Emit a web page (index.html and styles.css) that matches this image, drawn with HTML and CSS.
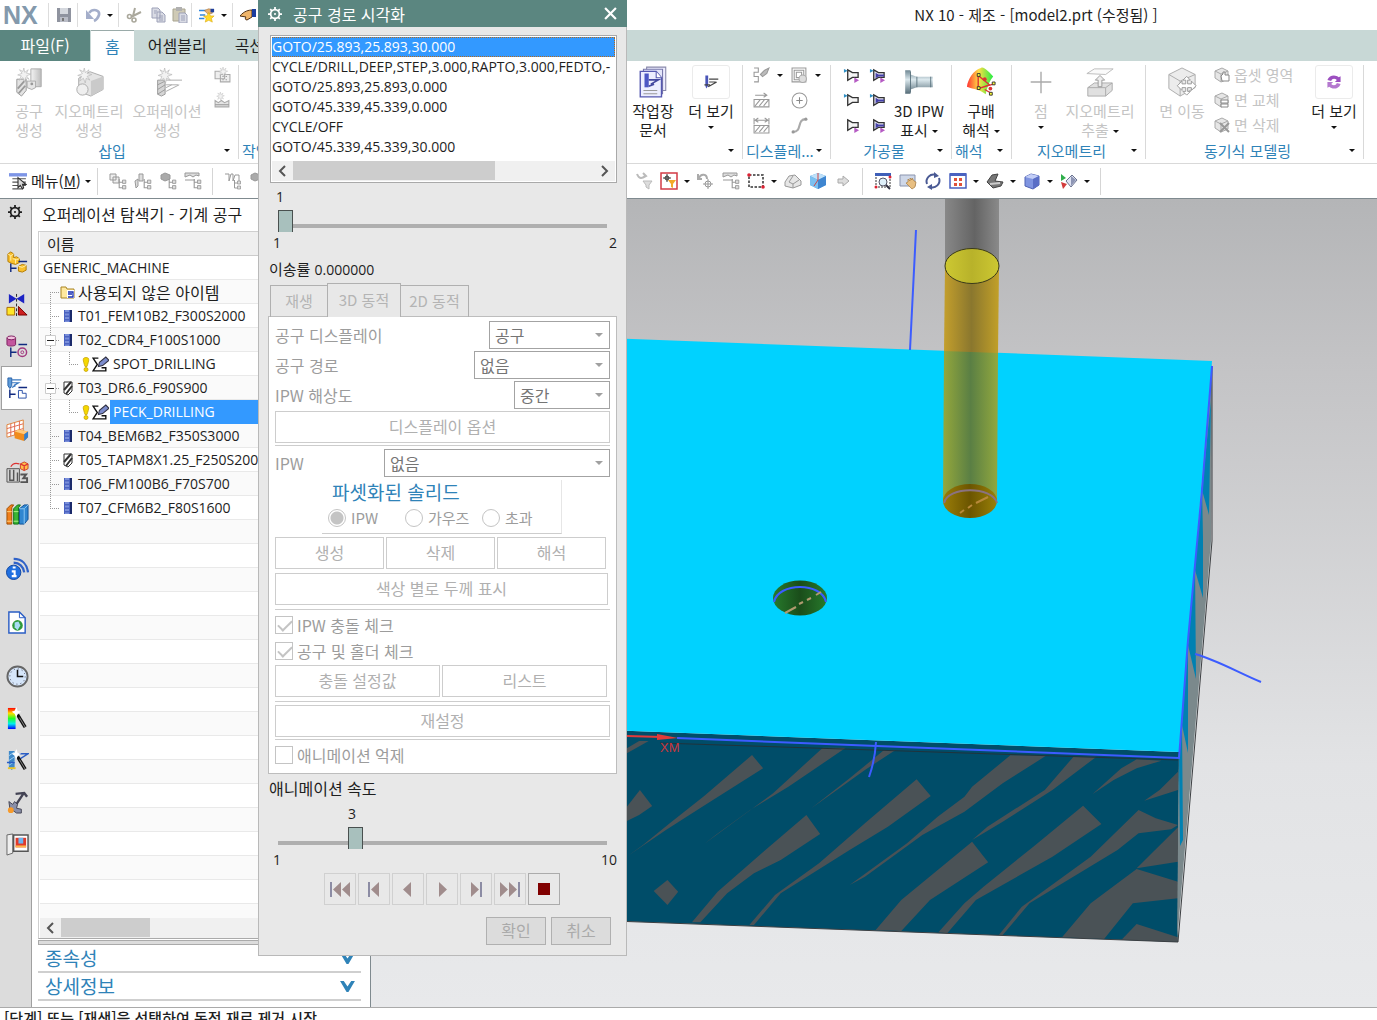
FILE: index.html
```html
<!DOCTYPE html>
<html lang="ko">

<head>
    <meta charset="UTF-8">
    <meta name="viewport" content="width=device-width, initial-scale=1.0">
    <title>NX 10 - 제조</title>
    <link rel="stylesheet" href="styles.css">
</head>

<body>
    <!-- 아이콘 모음 -->
    <svg class="defs" width="0" height="0" aria-hidden="true">
        <defs>
            <linearGradient id="metal"><stop offset="0" stop-color="#f4f4f4"/><stop offset="1" stop-color="#bdbdbd"/></linearGradient>
            <linearGradient id="steel" x2="0" y2="1"><stop offset="0" stop-color="#6f8793"/><stop offset=".4" stop-color="#dce9ee"/><stop offset="1" stop-color="#546b77"/></linearGradient>
            <linearGradient id="rainbow" x2="0" y2="1"><stop offset="0" stop-color="#f00"/><stop offset=".25" stop-color="#fd0"/><stop offset=".5" stop-color="#2f2"/><stop offset=".75" stop-color="#0ee"/><stop offset="1" stop-color="#00f"/></linearGradient>
            <linearGradient id="heat"><stop offset="0" stop-color="#f33"/><stop offset=".45" stop-color="#fd4"/><stop offset="1" stop-color="#2e4"/></linearGradient>
        </defs>
        <symbol id="star" viewBox="0 0 16 16"><path d="M8 0l1 5 4-3-2 4 5 1-5 2 3 4-4-2-1 5-2-5-4 3 2-5-4-1 5-2-3-4 4 2z" fill="#f2f2f2" stroke="#b5b5b5" stroke-width=".7"/></symbol>
        <symbol id="minitree" viewBox="0 0 8 10"><path d="M1 0v8h3M1 3h3" fill="none" stroke="#999"/><path d="M4 1h3v3H4zM4 6h3v3H4z" fill="#ddd" stroke="#999" stroke-width=".8"/></symbol>

        <symbol id="i-save" viewBox="0 0 16 16"><path d="M1 1h14v14H1z" fill="#8f939f"/><path d="M4 1h8v6H4z" fill="#d5d8de"/><path d="M4 10h8v5H4z" fill="#b9bcc6"/><path d="M6 11h2v3H6z" fill="#777"/></symbol>
        <symbol id="i-undo" viewBox="0 0 16 16"><path d="M4 6c4-5 11-3 10 2-1 3-3 5-5 6" fill="none" stroke="#a4aeca" stroke-width="2.600"/><path d="M1 3v9h8z" fill="#a4aeca"/></symbol>
        <symbol id="i-cut" viewBox="0 0 16 16"><path d="M9 1L7 9M15 5L5 10" stroke="#aaa89c" stroke-width="2"/><g fill="none" stroke="#aaa89c" stroke-width="1.600"><circle cx="3.500" cy="9.500" r="2"/><circle cx="8" cy="13" r="2"/></g></symbol>
        <symbol id="i-copy" viewBox="0 0 16 16"><path d="M2 1h6l2 2v8H2zM7 5h5l3 3v7H7z" fill="#d9dbe4" stroke="#9da1b8"/><path d="M9 9h4M9 11h4M9 13h4M4 4h3M4 6h2" stroke="#9da1b8"/></symbol>
        <symbol id="i-paste" viewBox="0 0 16 16"><path d="M1 2h12v12H1z" fill="#cfcab6" stroke="#a8a490"/><path d="M4 0h6v4H4z" fill="#b0b0b0"/><path d="M7 6h6l2 2v8H7z" fill="#d9dbe4" stroke="#9da1b8"/><path d="M9 9h4M9 11h4M9 13h4" stroke="#9da1b8"/></symbol>
        <symbol id="i-quick" viewBox="0 0 18 16"><path d="M0 3h8M1 8h6M0 12h6" stroke="#2f86e0" stroke-width="1.600"/><path d="M6 3l5-2 4 1v4l-5 1z" fill="#e7b06f" stroke="#94602a" stroke-width=".6"/><path d="M13 1h4v4h-4z" fill="#1f3f9c"/><path d="M11 5l2 4 4 0-3 3 1 4-4-2-4 2 1-4-3-3h4z" fill="#ffd92e" stroke="#d8a400" stroke-width=".6"/></symbol>
        <symbol id="i-hand" viewBox="0 0 16 16"><path d="M0 9c4-5 9-6 12-6v7l-5 3c-2 0-2-2-1-3z" fill="#f0b56a" stroke="#503014"/><path d="M12 2h4v8h-4z" fill="#1b3d9e"/></symbol>

        <symbol id="i-tool" viewBox="0 0 32 32"><path d="M18 2h11v19H18z" fill="url(#metal)" stroke="#aaa"/><path d="M14 15h9v7l-4 2-5-2z" fill="#e6e6e6" stroke="#aaa"/><circle cx="19" cy="18" r="1.500" fill="#999"/><path d="M3 13h10v12l-5 6-5-4z" fill="#e3e3e3" stroke="#999"/><path d="M4 23l8-9M5 28l7-8" stroke="#999" stroke-width="2"/><use href="#star" x="3" y="1" width="15" height="15"/></symbol>
        <symbol id="i-geom" viewBox="0 0 32 32"><path d="M5 12l12-7 14 5v14l-13 7-13-5z" fill="#e4e4e4" stroke="#aaa"/><path d="M18 15l13-5v14l-13 7z" fill="#cacaca"/><circle cx="9" cy="24" r="6" fill="#efefef" stroke="#aaa"/><use href="#star" x="2" y="1" width="18" height="16"/></symbol>
        <symbol id="i-oper" viewBox="0 0 32 32"><path d="M6 14h8v15l-4 2-4-2z" fill="#d5d5d5" stroke="#999"/><path d="M6 19l8-4M6 24l8-5M6 29l8-5" stroke="#999"/><path d="M15 14h17M15 19h13M15 26l14-7M15 22l6-3" fill="none" stroke="#aaa"/><use href="#star" x="5" y="1" width="17" height="16"/></symbol>
        <symbol id="i-prog" viewBox="0 0 16 16"><path d="M1 4h9v7H1zM6 7h9v7H6z" fill="#eee" stroke="#aaa"/><path d="M8 9h1M11 9h1M8 12h1M11 12h1" stroke="#888"/><use href="#star" x="4" y="0" width="9" height="9"/></symbol>
        <symbol id="i-meth" viewBox="0 0 16 16"><path d="M1 8l3 2 3-2 3 2 4-2v6H1z" fill="#e4e4e4" stroke="#aaa"/><path d="M1 12h13" stroke="#999"/><use href="#star" x="2" y="0" width="8" height="8"/></symbol>
        <symbol id="i-doc" viewBox="0 0 28 32"><path d="M8 2h18v22H8z" fill="#eef" stroke="#88a"/><path d="M5 4h18v23H5z" fill="#e4e6fa" stroke="#77a"/><path d="M2 6h15l5 6v18H2z" fill="#eceeff" stroke="#5558b0" stroke-width="1.300"/><path d="M17 6v6h5" fill="#fff" stroke="#5558b0"/><path d="M6 8h4v13H6z" fill="#4b56c4"/><path d="M10 14h9l-7 4M10 20l5-2" fill="none" stroke="#4449a0" stroke-width="1.600"/><path d="M5 24h13M5 27h13" stroke="#999"/></symbol>
        <symbol id="i-op" viewBox="0 0 16 16"><path d="M2 1h3v11l-2 3-1-3z" fill="#4a55b8"/><path d="M6 5h10l-8 0M6 8h7M5 13l9-5M1 11h6" fill="none" stroke="#444" stroke-width="1.300"/></symbol>

        <symbol id="i-path" viewBox="0 0 16 16"><path d="M1 1h4v4H1v4h4v5H1" fill="none" stroke="#999"/><path d="M7 7l4-4 4-2-2 5-4 3z" fill="#bbb" stroke="#999"/></symbol>
        <symbol id="i-rings" viewBox="0 0 16 16"><path d="M1 1h13v13H1zM3 3h9v9H3zM5 5h5v5H5z" fill="none" stroke="#999"/><circle cx="11" cy="11" r="3.500" fill="#ddd" stroke="#aaa"/></symbol>
        <symbol id="i-hatch" viewBox="0 0 16 16"><path d="M1 7h14v7H1zM2 13l5-6M6 13l5-6M10 13l5-6" fill="none" stroke="#999"/><path d="M2 3h11M10 1l3 2-3 2" fill="none" stroke="#999"/></symbol>
        <symbol id="i-hatch2" viewBox="0 0 16 16"><path d="M1 8h14v7H1zM2 14l5-6M6 14l5-6M10 14l5-6M1 1v6M15 1v6M2 3h12M5 1L2 3l3 2M11 1l3 2-3 2" fill="none" stroke="#999"/></symbol>
        <symbol id="i-circ" viewBox="0 0 16 16"><circle cx="8" cy="8" r="7" fill="none" stroke="#999"/><path d="M5 8h6M8 5v6" stroke="#888"/></symbol>
        <symbol id="i-curve" viewBox="0 0 16 16"><path d="M2 14c9 0 3-12 12-12" fill="none" stroke="#aaa" stroke-width="2"/><circle cx="2" cy="14" r="1.500" fill="#999"/><circle cx="14" cy="2" r="1.500" fill="#999"/></symbol>

        <symbol id="cone" viewBox="0 0 18 16"><path d="M5 2l5 3h6v5h-6l-5 3z" fill="#f4f4f4" stroke="#333" stroke-width="1.400"/></symbol>
        <symbol id="cone2" viewBox="0 0 18 16"><path d="M5 2l5 3h6v5h-6l-5 3z" fill="#e4e4f2" stroke="#333" stroke-width="1.400"/><path d="M7 5l3 2h6v2h-6l-3 2z" fill="#4440a8"/></symbol>
        <symbol id="i-c1" viewBox="0 0 18 16"><use href="#cone"/><path d="M1 1l4 2-4 2z" fill="#2f8fc4"/><path d="M12 10l5 3-5 3z" fill="#b65cc4"/></symbol>
        <symbol id="i-c2" viewBox="0 0 18 16"><use href="#cone2"/><path d="M1 1l4 2-4 2z" fill="#2f8fc4"/><path d="M12 10l5 3-5 3z" fill="#b65cc4"/></symbol>
        <symbol id="i-c3" viewBox="0 0 18 16"><use href="#cone"/><path d="M1 1l4 2-4 2z" fill="#2f8fc4"/></symbol>
        <symbol id="i-c4" viewBox="0 0 18 16"><use href="#cone2"/><path d="M1 1l4 2-4 2z" fill="#2f8fc4"/></symbol>
        <symbol id="i-c5" viewBox="0 0 18 16"><use href="#cone"/><path d="M12 10l5 3-5 3z" fill="#b65cc4"/></symbol>
        <symbol id="i-c6" viewBox="0 0 18 16"><use href="#cone2"/><path d="M12 10l5 3-5 3z" fill="#b65cc4"/></symbol>
        <symbol id="i-ipw" viewBox="0 0 28 32"><path d="M1 5h5v4l6 2h15v10H12l-6 2v4H1z" fill="url(#steel)"/><path d="M12 11v10M25 11v10M6 6v20" stroke="#536a76" stroke-width=".8"/></symbol>
        <symbol id="i-draft" viewBox="0 0 32 32"><path d="M16 1c3-2 9 5 13 9-4 5-6 10-8 19-6-5-12-5-20-8C2 13 8 3 16 1z" fill="url(#heat)"/><path d="M13 9l12 10M13 23l12-4M13 9v14l17-5M20 24l7 4" fill="none" stroke="#d33" stroke-width="1.500"/><path d="M12 7h3v3h-3zM12 21h3v3h-3zM28 16h3v3h-3zM25 27h3v3h-3z" fill="#ff3" stroke="#333"/><circle cx="20" cy="13" r="2" fill="#d33"/><circle cx="26" cy="23" r="2" fill="#d33"/></symbol>
        <symbol id="i-plus" viewBox="0 0 32 32"><path d="M16 5v23M5 16h22" stroke="#aaa" stroke-width="1.500"/></symbol>
        <symbol id="i-extract" viewBox="0 0 32 32"><path d="M2 7l8-5h20l-8 6z" fill="#fafafa" stroke="#bbb"/><path d="M3 22l7-5h19v8l-7 6H3z" fill="#e0e0e0" stroke="#aaa"/><path d="M3 22h19v9M22 22l7-5" fill="none" stroke="#aaa"/><path d="M16 9l5 5h-3v7h-4v-7h-3z" fill="#eee" stroke="#999"/></symbol>
        <symbol id="i-move" viewBox="0 0 32 32"><path d="M2 8l14-7 14 7v14L14 31 2 23z" fill="#ececec" stroke="#aaa"/><path d="M2 8l12 7v16M14 15l16-7" fill="none" stroke="#aaa"/><path d="M21 10l4 4h-3v4h4v-3l5 5-5 5v-3h-4v4h3l-4 4-4-4h3v-4h-4v3l-5-5 5-5v3h4v-4h-3z" fill="#fff" stroke="#999"/></symbol>
        <symbol id="i-cube" viewBox="0 0 16 16"><path d="M1 4l7-3 6 3v8l-7 3-6-4z" fill="#e6e6e6" stroke="#aaa"/><path d="M1 4l6 3v8M7 7l7-3" fill="none" stroke="#aaa"/></symbol>
        <symbol id="i-offset" viewBox="0 0 16 16"><use href="#i-cube"/><path d="M7 9l2-2v-2h2v3h4v6H8z" fill="#fff" stroke="#888"/></symbol>
        <symbol id="i-repl" viewBox="0 0 16 16"><use href="#i-cube"/><path d="M7 8h7v3H7zM7 12h7v3H7z" fill="#fff" stroke="#888"/></symbol>
        <symbol id="i-del" viewBox="0 0 16 16"><use href="#i-cube"/><path d="M6 6l9 9M15 6l-9 9" stroke="#999" stroke-width="2"/></symbol>
        <symbol id="i-sync" viewBox="0 0 16 16"><path d="M1 6c2-6 9-6 12-3l2-1v6H9l2-2C9 4 6 4 5 7z" fill="#9c4fc0"/><path d="M15 10c-2 6-9 6-12 3l-2 1V8h6l-2 2c2 2 5 2 6-1z" fill="#b478cf"/></symbol>

        <symbol id="i-menu" viewBox="0 0 16 16"><path d="M0 1h16v3H0z" fill="#7d95e6"/><path d="M3 6h12M3 9h12M3 12h12M3 15h9" stroke="#555"/><path d="M8 5v9l2-2 2 3 1-1-1-3h3z" fill="#ddd" stroke="#333"/></symbol>
        <symbol id="i-t1" viewBox="0 0 18 18"><path d="M1 2h6v6H1zM4 5h6v6H4z" fill="#eee" stroke="#999"/><use href="#minitree" x="9" y="7" width="9" height="11"/></symbol>
        <symbol id="i-t2" viewBox="0 0 18 18"><path d="M1 9l3-2v7l-2 2zM5 2h4v7H5z" fill="#ddd" stroke="#999"/><use href="#minitree" x="9" y="7" width="9" height="11"/></symbol>
        <symbol id="i-t3" viewBox="0 0 18 18"><path d="M2 3l4-2 5 2v4L6 9 2 7z" fill="#aaa" stroke="#999"/><use href="#minitree" x="9" y="7" width="9" height="11"/></symbol>
        <symbol id="i-t4" viewBox="0 0 18 18"><path d="M1 1h14v3l-3-1-3 2-3-2-5 2zM1 8h10" fill="#ddd" stroke="#999"/><use href="#minitree" x="9" y="7" width="9" height="11"/></symbol>
        <symbol id="i-t5" viewBox="0 0 18 18"><path d="M1 2h4v7l2-7h2v7l2-6h4v6" fill="none" stroke="#999"/><use href="#minitree" x="9" y="8" width="9" height="10"/></symbol>
        <symbol id="i-filter" viewBox="0 0 18 18"><path d="M2 2c2 5 5 5 8 2M8 1l3 3-4 2" fill="none" stroke="#bbb" stroke-width="2"/><path d="M8 9h9l-3 4v4l-3-2v-2z" fill="#ddd" stroke="#bbb"/></symbol>
        <symbol id="i-snap" viewBox="0 0 18 18"><path d="M1 1h16v16H1z" fill="#fff" stroke="#d23b46" stroke-width="1.500"/><circle cx="7" cy="6" r="2" fill="none" stroke="#333"/><path d="M3 6h8M7 2v8" stroke="#333"/><path d="M8 8h8l-3 4v4l-2-1v-3z" fill="#f3a928"/></symbol>
        <symbol id="i-rot" viewBox="0 0 18 18"><path d="M2 6c2-5 8-4 8 1M1 2v5h4" fill="none" stroke="#aaa" stroke-width="2"/><circle cx="11" cy="12" r="3" fill="none" stroke="#999"/><path d="M6 12h10M11 7v10" stroke="#999"/></symbol>
        <symbol id="i-rect" viewBox="0 0 18 18"><path d="M2 3h14v12H2z" fill="none" stroke="#333" stroke-width="1.500" stroke-dasharray="2.500 1.500"/><circle cx="2" cy="3" r="1.800" fill="#d23"/><circle cx="16" cy="15" r="1.800" fill="#d23"/></symbol>
        <symbol id="i-solid" viewBox="0 0 18 18"><path d="M1 10l4-6 6-1 6 6v4l-8 3-8-2z" fill="#e6e6e6" stroke="#999"/><path d="M5 10l4-6M9 12v4M5 10l4 2 6-4" fill="none" stroke="#999"/></symbol>
        <symbol id="i-bcube" viewBox="0 0 18 18"><path d="M1 4l8-3 8 3v9l-8 4-8-4z" fill="#4e9fe4"/><path d="M1 4l8-3 8 3-8 4z" fill="#bfe0f8"/><path d="M1 4l8 4v9l-8-4z" fill="#7cc0f0"/><path d="M9 8l8-4v9l-8 4z" fill="#3f86d0"/><path d="M9 1v7l-4 6" fill="none" stroke="#c44"/></symbol>
        <symbol id="i-arrow" viewBox="0 0 18 18"><path d="M4 7h5V4l6 5-6 5v-3H4z" fill="#ddd" stroke="#aaa"/></symbol>
        <symbol id="i-fit" viewBox="0 0 18 18"><path d="M2 3h14v12H2z" fill="#fff" stroke="#333" stroke-dasharray="2 1"/><path d="M1 1h16v3H1z" fill="#3f5fb8"/><circle cx="9" cy="10" r="4" fill="#dff0fa" stroke="#556"/><path d="M12 13l4 4" stroke="#334" stroke-width="2"/><circle cx="2" cy="15" r="1.500" fill="#d23"/><circle cx="16" cy="5" r="1.500" fill="#d23"/></symbol>
        <symbol id="i-pan" viewBox="0 0 18 18"><path d="M1 3h15v11H1z" fill="#ced7e8" stroke="#8a94ad"/><path d="M7 11l2-1V7l2 2V6l2 2V6l2 3 2 1-1 5-3 2z" fill="#e8bf82" stroke="#a87b3f" stroke-width=".7"/></symbol>
        <symbol id="i-refresh" viewBox="0 0 18 18"><path d="M3 12A7 7 0 0 1 12 3M15 6a7 7 0 0 1-9 9" fill="none" stroke="#4a5a94" stroke-width="2"/><path d="M10 0l5 4-5 2zM8 12l-5 3 5 3z" fill="#4a5a94"/></symbol>
        <symbol id="i-layout" viewBox="0 0 18 18"><path d="M1 2h16v14H1z" fill="#fff" stroke="#4a62c0" stroke-width="1.500"/><path d="M1 1h16v3H1z" fill="#4a62c0"/><path d="M5 6h3v3H5zM10 6h3v3h-3zM5 11h3v3H5zM10 11h3v3h-3z" fill="#e0523a"/></symbol>
        <symbol id="i-view" viewBox="0 0 18 18"><path d="M1 10l5-7 6-1-3 7 8 1-2 4-8 2z" fill="#777" stroke="#444"/><path d="M4 12l10-1" stroke="#ccc" stroke-width="2"/></symbol>
        <symbol id="i-shade" viewBox="0 0 18 18"><path d="M2 5l6-3 8 2v9l-6 4-8-3z" fill="#7f94e0" stroke="#4f62b4"/><path d="M2 5l8 2 6-3-8-2z" fill="#c3cef6"/><path d="M10 7l6-3v9l-6 4z" fill="#5a6ec6"/></symbol>
        <symbol id="i-orient" viewBox="0 0 18 18"><path d="M1 2l5 4-5 3z" fill="#2fae4b"/><path d="M1 10l6 2-4 5z" fill="#d23b3b"/><path d="M6 9l6-6 5 5-6 7z" fill="#dfe3f2" stroke="#6b7390"/><path d="M11 4v10l5-6z" fill="#8d95b4"/></symbol>

        <symbol id="i-gear" viewBox="0 0 16 16"><circle cx="8" cy="8" r="5" fill="none" stroke="currentColor" stroke-width="2"/><path d="M8 0v3M8 13v3M0 8h3M13 8h3M2.500 2.500l2 2M11.500 11.500l2 2M13.500 2.500l-2 2M4.500 11.500l-2 2" stroke="currentColor" stroke-width="2"/><circle cx="8" cy="8" r="1.200" fill="currentColor"/></symbol>
        <symbol id="i-asm" viewBox="0 0 24 24"><path d="M2 3l3-2 3 2v4l3-1 3 2v4l-4 2-4-1-4-2zM13 16l4-2 4 1v5l-4 2-4-1z" fill="#f8bf2c" stroke="#b57b00"/><path d="M2 3l3 2 3-2M5 5v5M7 8l4 1 3-1M10 9v4M13 16l4 1 4-2" fill="none" stroke="#fff0b0"/><path d="M5 13v9M5 18h6M13 11h9" stroke="#112a80" stroke-width="1.500"/></symbol>
        <symbol id="i-con" viewBox="0 0 24 24"><path d="M3 1l8 5-8 5zM19 1l-8 5 8 5z" fill="#1c23c4"/><path d="M1 15h8v8H1z" fill="#ffe628" stroke="#a86b00"/><path d="M13 14l9 9h-9z" fill="#cc1f1f" stroke="#700"/><path d="M11 1v23" stroke="#222" stroke-dasharray="3 2"/></symbol>
        <symbol id="i-part" viewBox="0 0 24 24"><path d="M1 3v7c0 2 9 2 9 0V3" fill="#c3559e" stroke="#7d1f5f"/><ellipse cx="5.500" cy="3" rx="4.500" ry="2" fill="#f2c2df" stroke="#7d1f5f"/><path d="M5 13v10M5 18h6M13 10h9" stroke="#112a80" stroke-width="1.500"/><circle cx="17" cy="18" r="4.500" fill="none" stroke="#a2397f" stroke-width="1.500"/><circle cx="17" cy="18" r="1.500" fill="none" stroke="#a2397f"/></symbol>
        <symbol id="i-opnav" viewBox="0 0 24 24"><path d="M2 1h4v8l-2 3-2-3z" fill="#5d9bd8" stroke="#2a62a8"/><path d="M6 3h10M6 6h7l-5 3M6 11l4-2" fill="none" stroke="#3a78c0" stroke-width="1.300"/><path d="M4 13v9M4 18h6M13 11h9" stroke="#112a80" stroke-width="1.500"/><path d="M13 14h4v3h4v5h-8z" fill="#fff" stroke="#2a4fa8"/></symbol>
        <symbol id="i-feat" viewBox="0 0 24 24"><path d="M1 6l17-5v13L1 19z" fill="#fff" stroke="#e0813a"/><path d="M1 10l17-5M1 15l17-5M5 5v13M9 4v13M14 2v13" stroke="#e06a50"/><path d="M9 13l4-2 10 2v6l-4 4-10-3z" fill="#f08c1c"/><path d="M9 13l4-2 10 2-4 3z" fill="#ffc97a"/><path d="M19 16l4-3v6l-4 4z" fill="#2f7fd0"/></symbol>
        <symbol id="i-mach" viewBox="0 0 24 24"><path d="M1 8h13v14H1z" fill="#d4d4d4" stroke="#555"/><path d="M4 9v11h4V9M12 12v9" fill="none" stroke="#555" stroke-width="1.500"/><path d="M15 3l4-2 4 2v5l-4 2-4-2z" fill="#ffc04a" stroke="#c42"/><path d="M15 3l4 2 4-2M19 5v5M5 6c2-4 6-4 9-3" fill="none" stroke="#d33" stroke-width="1.300"/><path d="M15 14h6l-3 4h4v4h-7" fill="none" stroke="#555" stroke-width="2"/></symbol>
        <symbol id="i-books" viewBox="0 0 24 24"><path d="M1 6l4-4h3l-2 3v17H1z" fill="#f07f1c" stroke="#a04e00"/><path d="M8 6l4-4h3l-2 3v17H8z" fill="#38b635" stroke="#0f6f12"/><path d="M14 6l5-4h4v15l-4 5h-5z" fill="#2f86d0" stroke="#0f4f94"/><path d="M14 6h5v16M19 6l4-4" fill="none" stroke="#8cc8f4"/><path d="M1 9h5M1 19h5" stroke="#ffd07a"/><path d="M8 9h5M8 19h5" stroke="#b4f08a"/></symbol>
        <symbol id="i-info" viewBox="0 0 24 24"><circle cx="8" cy="16" r="7.500" fill="#1f6fe0" stroke="#1247a0"/><path d="M7 11h3M6 15h3v5M6 20h5" stroke="#fff" stroke-width="2.200" fill="none"/><path d="M8 2c9 0 14 6 15 14M8 6c6 0 10 4 11 10" fill="none" stroke="#2f62c8" stroke-width="2.400"/></symbol>
        <symbol id="i-web" viewBox="0 0 24 24"><path d="M3 1h11l6 6v16H3z" fill="#fff" stroke="#2a5dc4" stroke-width="1.500"/><path d="M14 1v6h6" fill="none" stroke="#2a5dc4"/><circle cx="12" cy="15" r="5.500" fill="#2f9a3a"/><path d="M9 12l4-1 2 4-3 5-3-3z" fill="#a8dcf4"/></symbol>
        <symbol id="i-clock" viewBox="0 0 24 24"><circle cx="12" cy="12" r="10.500" fill="#d6e6fa" stroke="#666" stroke-width="2"/><circle cx="12" cy="12" r="8" fill="none" stroke="#445" stroke-dasharray="1 3.200"/><path d="M12 5v7h6" fill="none" stroke="#111" stroke-width="1.600"/></symbol>
        <symbol id="i-wand" viewBox="0 0 24 24"><path d="M12 8l8 13" stroke="#111" stroke-width="3.500"/><path d="M14 11l6 10" stroke="#888"/><path d="M11 0l1 4 4 1-4 2-1 4-2-4-3-2 3-1z" fill="#fff"/></symbol>
        <symbol id="i-color" viewBox="0 0 24 24"><path d="M2 1h8v22H2z" fill="url(#rainbow)"/><use href="#i-wand"/></symbol>
        <symbol id="i-opwand" viewBox="0 0 24 24"><path d="M3 2h6v17l-3 3-3-3z" fill="#3f88c8"/><path d="M3 7l6-4M3 12l6-4M3 17l6-4" stroke="#9cd0f0"/><path d="M10 5h13l-8 5M1 14h8" fill="none" stroke="#2a5dc4" stroke-width="1.500"/><path d="M2 20h8" stroke="#e8c62a" stroke-width="2"/><use href="#i-wand"/></symbol>
        <symbol id="i-fix" viewBox="0 0 24 24"><path d="M10 3l9-1 3 4M18 3l-8 12" fill="none" stroke="#445" stroke-width="2.500"/><path d="M3 11l4 3 2-3 3 3-1 4 5 1v4h-5l-7-5z" fill="#8a8fa8" stroke="#445"/><circle cx="5" cy="20" r="3" fill="#f79a2a"/></symbol>
        <symbol id="i-role" viewBox="0 0 24 24"><path d="M1 2l6-1v20l-6 2z" fill="#eee" stroke="#666"/><path d="M8 2h15v17H8z" fill="#fff" stroke="#555" stroke-width="1.500"/><path d="M10 5h11v10H10z" fill="#e03a2a"/><path d="M13 5h5v6h-5z" fill="#6cb4f0"/><path d="M10 13h11v2H10z" fill="#ffb84a"/></symbol>

        <symbol id="t-tee" viewBox="0 0 22 24"><path d="M10.500 0v24M12 12.500h8" stroke="#999" stroke-dasharray="1 1"/></symbol>
        <symbol id="t-first" viewBox="0 0 22 24"><path d="M10.500 12v12M12 12.500h8" stroke="#999" stroke-dasharray="1 1"/></symbol>
        <symbol id="t-end" viewBox="0 0 22 24"><path d="M10.500 0v12M10 12.500h10" stroke="#999" stroke-dasharray="1 1"/></symbol>
        <symbol id="t-open" viewBox="0 0 22 24"><path d="M10.500 0v24M12 12.500h8" stroke="#999" stroke-dasharray="1 1"/><path d="M5.500 7.500h10v10h-10z" fill="#fff" stroke="#ccc"/><path d="M7 12.500h7" stroke="#222"/></symbol>
        <symbol id="t-child" viewBox="0 0 42 24"><path d="M10.500 0v24M29.500 0v12M29 12.500h10" fill="none" stroke="#999" stroke-dasharray="1 1"/></symbol>
        <symbol id="n-folder" viewBox="0 0 16 16"><path d="M1 3h5l1 2h7v9H1z" fill="#ffe9a0" stroke="#a98423"/><path d="M7 6h7v8H7z" fill="#fff"/><path d="M8 8h5v5H8M8 10h4" fill="none" stroke="#1a2fb0" stroke-width="1.300"/></symbol>
        <symbol id="n-mill" viewBox="0 0 16 16"><path d="M4 2h8v12H4z" fill="#4a62c0"/><path d="M6 2v12M8 2v12" stroke="#a9bbf2" stroke-dasharray="2 1.500"/><path d="M11 2v12" stroke="#1b2a6a" stroke-width="2"/></symbol>
        <symbol id="n-drill" viewBox="0 0 16 16"><path d="M4 2h8v9l-4 4-4-2z" fill="#fff" stroke="#333"/><path d="M4 10l7-8M6 14l6-8" stroke="#333" stroke-width="2"/></symbol>
        <symbol id="n-warn" viewBox="0 0 10 16"><path d="M5 1c4 0 3 3 1 9H4C2 4 1 1 5 1z" fill="#f5d800" stroke="#c09a00" stroke-width=".7"/><circle cx="5" cy="13" r="2" fill="#f5d800" stroke="#c09a00" stroke-width=".7"/></symbol>
        <symbol id="n-edit" viewBox="0 0 16 16"><path d="M6 2H1l4 6-4 6h12v-3h-4" fill="#fff" stroke="#111" stroke-width="1.300"/><path d="M6 10l1-4 6-5 3 3-6 5z" fill="#7c8ccc" stroke="#334"/></symbol>
        <symbol id="chev" viewBox="0 0 16 14"><path d="M0 1h4l4 6 4-6h4L9 13H7z" fill="#2f83b8"/></symbol>
        <symbol id="sb-l" viewBox="0 0 10 12"><path d="M8 1L3 6l5 5" fill="none" stroke="#555" stroke-width="2"/></symbol>
        <symbol id="sb-r" viewBox="0 0 10 12"><path d="M2 1l5 5-5 5" fill="none" stroke="#555" stroke-width="2"/></symbol>
    </svg>

    <div class="app">
        <header class="titlebar">
            <div class="quick">
                <span class="logo">NX</span>
                <button class="q sep" aria-label="저장"><svg><use href="#i-save"/></svg></button>
                <button class="q sep" aria-label="실행취소"><svg><use href="#i-undo"/></svg><i class="caret"></i></button>
                <button class="q sep" aria-label="잘라내기"><svg><use href="#i-cut"/></svg></button>
                <button class="q" aria-label="복사"><svg><use href="#i-copy"/></svg></button>
                <button class="q" aria-label="붙여넣기"><svg><use href="#i-paste"/></svg></button>
                <button class="q sep" aria-label="반복"><svg><use href="#i-quick"/></svg><i class="caret"></i></button>
                <button class="q sep" aria-label="터치"><svg><use href="#i-hand"/></svg></button>
            </div>
            <h1>NX 10 - 제조 - [model2.prt (수정됨) ]</h1>
        </header>

        <nav class="tabs">
            <a href="#" class="file">파일(F)</a>
            <a href="#" class="on">홈</a>
            <a href="#">어셈블리</a>
            <a href="#">곡선</a>
        </nav>

        <section class="ribbon">
            <div class="group g-insert">
                <div class="tools">
                    <button class="big off w58"><svg><use href="#i-tool"/></svg>공구<br>생성</button>
                    <button class="big off w62"><svg><use href="#i-geom"/></svg><span>지오메트리<br>생성</span></button>
                    <button class="big off w94"><svg><use href="#i-oper"/></svg>오퍼레이션<br>생성</button>
                    <div class="smalls one">
                        <button aria-label="프로그램"><svg><use href="#i-prog"/></svg></button>
                        <button aria-label="방법"><svg><use href="#i-meth"/></svg></button>
                    </div>
                </div>
                <div class="cap"><span>삽입</span><i class="caret"></i></div>
            </div>
            <div class="group g-work">
                <div class="tools right">
                    <button class="big w58"><svg><use href="#i-doc"/></svg>작업장<br>문서</button>
                    <button class="big w58"><svg class="boxed" viewBox="-11 -9 38 34"><use href="#i-op" width="16" height="16"/></svg>더 보기<i class="caret"></i></button>
                </div>
                <div class="cap start"><span>작업</span><i class="caret"></i></div>
            </div>
            <div class="group g-disp">
                <div class="tools">
                    <div class="smalls two">
                        <button aria-label="경로"><svg><use href="#i-path"/></svg><i class="caret"></i></button>
                        <button aria-label="경계"><svg><use href="#i-rings"/></svg><i class="caret"></i></button>
                        <button aria-label="레벨"><svg><use href="#i-hatch"/></svg></button>
                        <button aria-label="원"><svg><use href="#i-circ"/></svg></button>
                        <button aria-label="범위"><svg><use href="#i-hatch2"/></svg></button>
                        <button aria-label="곡선"><svg><use href="#i-curve"/></svg></button>
                    </div>
                </div>
                <div class="cap start"><span>디스플레...</span><i class="caret"></i></div>
            </div>
            <div class="group g-ipw">
                <div class="tools">
                    <div class="smalls cones">
                        <button aria-label="시작 회전"><svg><use href="#i-c1"/></svg></button>
                        <button aria-label="끝 회전"><svg><use href="#i-c2"/></svg></button>
                        <button aria-label="시작"><svg><use href="#i-c3"/></svg></button>
                        <button aria-label="시작 채움"><svg><use href="#i-c4"/></svg></button>
                        <button aria-label="끝"><svg><use href="#i-c5"/></svg></button>
                        <button aria-label="끝 채움"><svg><use href="#i-c6"/></svg></button>
                    </div>
                    <button class="big w58"><svg><use href="#i-ipw"/></svg>3D IPW<br>표시<i class="caret"></i></button>
                </div>
                <div class="cap"><span>가공물</span><i class="caret"></i></div>
            </div>
            <div class="group g-anal">
                <div class="tools">
                    <button class="big w58"><svg><use href="#i-draft"/></svg>구배<br>해석<i class="caret"></i></button>
                </div>
                <div class="cap start"><span>해석</span><i class="caret"></i></div>
            </div>
            <div class="group g-geo">
                <div class="tools">
                    <button class="big off w58"><svg><use href="#i-plus"/></svg>점<i class="caret"></i></button>
                    <button class="big off w70"><svg><use href="#i-extract"/></svg>지오메트리<br>추출<i class="caret"></i></button>
                </div>
                <div class="cap"><span>지오메트리</span><i class="caret"></i></div>
            </div>
            <div class="group g-sync">
                <div class="tools">
                    <button class="big off w58"><svg><use href="#i-move"/></svg>면 이동</button>
                    <div class="lines">
                        <button><svg><use href="#i-offset"/></svg>옵셋 영역</button>
                        <button><svg><use href="#i-repl"/></svg>면 교체</button>
                        <button><svg><use href="#i-del"/></svg>면 삭제</button>
                    </div>
                    <button class="big w58"><svg class="boxed" viewBox="-11 -9 38 34"><use href="#i-sync" width="16" height="16"/></svg>더 보기<i class="caret"></i></button>
                </div>
                <div class="cap"><span>동기식 모델링</span><i class="caret"></i></div>
            </div>
        </section>

        <section class="toolbar">
            <div class="bar-left">
                <button class="menu"><svg><use href="#i-menu"/></svg><span>메뉴(<u>M</u>)</span><i class="caret"></i></button>
                <span class="rule"></span>
                <button aria-label="프로그램 뷰"><svg><use href="#i-t1"/></svg></button>
                <button aria-label="공구 뷰"><svg><use href="#i-t2"/></svg></button>
                <button aria-label="지오메트리 뷰"><svg><use href="#i-t3"/></svg></button>
                <button aria-label="방법 뷰"><svg><use href="#i-t4"/></svg></button>
                <span class="rule"></span>
                <button aria-label="찾기"><svg><use href="#i-t5"/></svg></button>
                <button aria-label="객체"><svg><use href="#i-t3"/></svg></button>
            </div>
            <button aria-label="필터"><svg><use href="#i-filter"/></svg></button>
            <button aria-label="스냅"><svg><use href="#i-snap"/></svg><i class="caret"></i></button>
            <button aria-label="회전"><svg><use href="#i-rot"/></svg></button>
            <button aria-label="트리"><svg><use href="#i-t4"/></svg></button>
            <button aria-label="사각 선택"><svg><use href="#i-rect"/></svg><i class="caret"></i></button>
            <button aria-label="솔리드"><svg><use href="#i-solid"/></svg></button>
            <button aria-label="큐브"><svg><use href="#i-bcube"/></svg></button>
            <button aria-label="다음"><svg><use href="#i-arrow"/></svg></button>
            <span class="rule"></span>
            <button aria-label="맞춤"><svg><use href="#i-fit"/></svg></button>
            <button aria-label="이동"><svg><use href="#i-pan"/></svg></button>
            <button aria-label="새로 고침"><svg><use href="#i-refresh"/></svg></button>
            <button aria-label="배치"><svg><use href="#i-layout"/></svg><i class="caret"></i></button>
            <button aria-label="뷰"><svg><use href="#i-view"/></svg><i class="caret"></i></button>
            <button aria-label="음영"><svg><use href="#i-shade"/></svg><i class="caret"></i></button>
            <button aria-label="방향"><svg><use href="#i-orient"/></svg><i class="caret"></i></button>
            <span class="rule"></span>
        </section>

        <main class="work">
            <nav class="resource">
                <button class="gear" aria-label="설정"><svg><use href="#i-gear"/></svg></button>
                <button aria-label="어셈블리 탐색기"><svg><use href="#i-asm"/></svg></button>
                <button aria-label="구속조건 탐색기"><svg><use href="#i-con"/></svg></button>
                <button aria-label="파트 탐색기"><svg><use href="#i-part"/></svg></button>
                <button class="on" aria-label="오퍼레이션 탐색기"><svg><use href="#i-opnav"/></svg></button>
                <button aria-label="가공 특징형상"><svg><use href="#i-feat"/></svg></button>
                <button aria-label="기계 공구 탐색기"><svg><use href="#i-mach"/></svg></button>
                <button class="far" aria-label="재사용 라이브러리"><svg><use href="#i-books"/></svg></button>
                <button class="far" aria-label="HD3D"><svg><use href="#i-info"/></svg></button>
                <button class="far" aria-label="웹 브라우저"><svg><use href="#i-web"/></svg></button>
                <button aria-label="히스토리"><svg><use href="#i-clock"/></svg></button>
                <button aria-label="색상"><svg><use href="#i-color"/></svg></button>
                <button aria-label="가공 마법사"><svg><use href="#i-opwand"/></svg></button>
                <button aria-label="도구"><svg><use href="#i-fix"/></svg></button>
                <button aria-label="역할"><svg><use href="#i-role"/></svg></button>
            </nav>

            <aside class="navigator">
                <h2>오퍼레이션 탐색기 - 기계 공구</h2>
                <div class="tree">
                    <div class="head">이름</div>
                    <ul>
                        <li class="root">GENERIC_MACHINE</li>
                        <li class="ko"><svg class="b"><use href="#t-first"/></svg><svg class="n"><use href="#n-folder"/></svg>사용되지 않은 아이템</li>
                        <li><svg class="b"><use href="#t-tee"/></svg><svg class="n"><use href="#n-mill"/></svg>T01_FEM10B2_F300S2000</li>
                        <li><svg class="b"><use href="#t-open"/></svg><svg class="n"><use href="#n-mill"/></svg>T02_CDR4_F100S1000</li>
                        <li><svg class="b2"><use href="#t-child"/></svg><svg class="w"><use href="#n-warn"/></svg><svg class="e"><use href="#n-edit"/></svg><span>SPOT_DRILLING</span></li>
                        <li><svg class="b"><use href="#t-open"/></svg><svg class="n"><use href="#n-drill"/></svg>T03_DR6.6_F90S900</li>
                        <li><svg class="b2"><use href="#t-child"/></svg><svg class="w"><use href="#n-warn"/></svg><svg class="e"><use href="#n-edit"/></svg><span class="sel">PECK_DRILLING</span></li>
                        <li><svg class="b"><use href="#t-tee"/></svg><svg class="n"><use href="#n-mill"/></svg>T04_BEM6B2_F350S3000</li>
                        <li><svg class="b"><use href="#t-tee"/></svg><svg class="n"><use href="#n-drill"/></svg>T05_TAPM8X1.25_F250S2000</li>
                        <li><svg class="b"><use href="#t-tee"/></svg><svg class="n"><use href="#n-mill"/></svg>T06_FM100B6_F70S700</li>
                        <li><svg class="b"><use href="#t-end"/></svg><svg class="n"><use href="#n-mill"/></svg>T07_CFM6B2_F80S1600</li>
                    </ul>
                    <div class="hscroll"><svg><use href="#sb-l"/></svg><span class="thumb short"></span></div>
                </div>
                <div class="splitter"></div>
                <button class="fold">종속성<svg><use href="#chev"/></svg></button>
                <button class="fold">상세정보<svg><use href="#chev"/></svg></button>
            </aside>

            <svg class="view" viewBox="371 199 1006 808" preserveAspectRatio="xMaxYMin slice">
                <defs>
                    <linearGradient id="sky" x2="0" y2="1"><stop offset="0" stop-color="#b4b5b7"/><stop offset=".2" stop-color="#c3c3c5"/><stop offset=".7" stop-color="#e2e3e5"/><stop offset="1" stop-color="#e8e9eb"/></linearGradient>
                    <linearGradient id="shank"><stop offset="0" stop-color="#888"/><stop offset=".55" stop-color="#646464"/><stop offset="1" stop-color="#8a8a8a"/></linearGradient>
                    <linearGradient id="gold"><stop offset="0" stop-color="#c49f2c"/><stop offset=".5" stop-color="#8a772e"/><stop offset="1" stop-color="#c2a028"/></linearGradient>
                    <linearGradient id="olive"><stop offset="0" stop-color="#95a83c"/><stop offset=".5" stop-color="#5a7f44"/><stop offset="1" stop-color="#92a83e"/></linearGradient>
                    <linearGradient id="lid"><stop offset="0" stop-color="#cdc832"/><stop offset=".5" stop-color="#b8b22a"/><stop offset="1" stop-color="#cdc832"/></linearGradient>
                    <linearGradient id="bore"><stop offset="0" stop-color="#277a2c"/><stop offset=".5" stop-color="#1a4d1a"/><stop offset="1" stop-color="#277a2c"/></linearGradient>
                    <linearGradient id="bore2"><stop offset="0" stop-color="#9a7d08"/><stop offset=".5" stop-color="#6b5500"/><stop offset="1" stop-color="#9a8008"/></linearGradient>
                    <clipPath id="front"><path d="M371 731L1178 759v183L371 912z"/></clipPath>
                </defs>
                <path d="M371 199h1006v808H371z" fill="url(#sky)"/>
                <!-- 소재 -->
                <path d="M371 721l808 31-1 190L371 912z" fill="#004d69"/>
                <g clip-path="url(#front)">
                    <g transform="translate(620 690) scale(.3827 .3333)" fill="#4a5256">
                        <path d="M18 350L52 300l32 48-34 27-32 18z"/>
                        <path d="M345 195l29 40-159 115-95 70-100 78 40-33 70-65 90-82z"/>
                        <path d="M530 173h60l-70 55-80 62-100 70-90 75-30 27 180-152z"/>
                        <path d="M690 180h30l-80 60-140 115 100-90z"/>
                        <path d="M487 375l36 57-103 78-70 40-70 60-70 87h-22l67-92 125-125z"/>
                        <path d="M775 268l37 50-112 92-100 70-180 130-70 95h-12l67-90 115-95 120-120z"/>
                        <path d="M1020 196h95l-115 84-100 85-110 70-150 125-40 25 150-125 80-80 70-60 20-30z"/>
                        <path d="M1185 200h60l-115 100-130 95-80 55 40-40 150-110z"/>
                        <path d="M920 455l42 62-152 113-75 93-67-3 67-90z"/>
                        <path d="M1210 347l48 55-128 98-200 130-75 100-23-3 68-87 50-50 130-120z"/>
                        <path d="M1355 360l45 25 58 20-18 13-85 12-55 50-230 160-70 95h-10l60-85 180-150z"/>
                        <path d="M1458 412L1350 535l108-20z"/>
                        <path d="M1350 537l108 38v50l-118 15-75 107-110-5 75-102z"/>
                        <path d="M1350 702l108 40v15l-148-7z"/>
                        <path d="M1350 208l65 4-65 23-60 35-55 42 75-77z"/>
                        <path d="M1458 245l-48 55-40 32 88-32z"/>
                        <path d="M18 190l57-37H50l-32 22z"/>
                        <path d="M124 570l28 35-28 40-36-42z"/>
                    </g>
                </g>
                <path d="M1212 361l-1 180-34 401 2-190z" fill="#7b898c"/>
                <path d="M1211 400l-9 90 7 25zM1202 485l-7 85 8 28v-60zM1195 565l-7 80 8 34zM1188 640l-6 85 6 28zM1182 722l-3 34 1 90 3-6z" fill="#0081b2"/>
                <path d="M1212 366v175l-34 401-807-30" fill="none" stroke="#3c3f42"/>
                <path d="M371 329l841 32-33 391L371 721z" fill="#00d2ff"/>
                <path d="M1212 366l-10 124-14 150-9 118-502-20" fill="none" stroke="#3c5cff" stroke-width="2"/>
                <path d="M660 743l518 17" stroke="#20333c"/>
                <path d="M916 230l-6 120M876 742q-1 18-7 35M1195 654c22 6 44 19 66 28" fill="none" stroke="#3c5cff" stroke-width="2"/>
                <path d="M627 736l35 1" stroke="#e23a3a" stroke-width="2"/>
                <path d="M657 734l21 4-21 2z" fill="#e23a3a"/>
                <text x="660" y="752" class="axis">XM</text>
                <!-- 드릴 구멍 -->
                <ellipse cx="800" cy="598" rx="27" ry="17.500" fill="url(#bore)"/>
                <path d="M774 602c4-20 48-20 52 0" fill="none" stroke="#3c5cff" stroke-width="2"/>
                <path d="M785 613l11-6M799 604l4-2M807 600l4-2M816 595l5-3" stroke="#b09a70" stroke-width="2"/>
                <!-- 공구 -->
                <path d="M945 199h54v67h-54z" fill="url(#shank)"/>
                <path d="M945 266h54l-1 88-54-2z" fill="url(#gold)"/>
                <path d="M944 351l54 2-1 148h-54z" fill="url(#olive)"/>
                <ellipse cx="972" cy="266" rx="27" ry="17.500" fill="url(#lid)" stroke="#3a3a1a"/>
                <ellipse cx="970" cy="501" rx="27" ry="17" fill="url(#bore2)"/>
                <path d="M944 503c4-17 48-17 53 0" fill="none" stroke="#8a7280" stroke-width="2"/>
                <path d="M960 513l4-3M968 508l4-3M976 503l12-6" stroke="#b8893a" stroke-width="2"/>
            </svg>
        </main>

        <footer class="status">[단계] 또는 [재생]을 선택하여 동적 재료 제거 시작</footer>
    </div>

    <form class="dialog">
        <div class="dlg-head"><svg><use href="#i-gear"/></svg><h2>공구 경로 시각화</h2><button type="button" aria-label="닫기"><svg viewBox="0 0 12 12"><path d="M1 1l10 10M11 1L1 11" stroke="#fff" stroke-width="2"/></svg></button></div>
        <div class="dlg-body">
            <div class="listbox">
                <ul role="listbox" aria-label="공구 경로">
                    <li role="option" class="sel">GOTO/25.893,25.893,30.000</li>
                    <li role="option">CYCLE/DRILL,DEEP,STEP,3.000,RAPTO,3.000,FEDTO,-</li>
                    <li role="option">GOTO/25.893,25.893,0.000</li>
                    <li role="option">GOTO/45.339,45.339,0.000</li>
                    <li role="option">CYCLE/OFF</li>
                    <li role="option">GOTO/45.339,45.339,30.000</li>
                </ul>
                <div class="hscroll"><svg><use href="#sb-l"/></svg><span class="thumb"></span><svg class="end"><use href="#sb-r"/></svg></div>
            </div>
            <div class="slide">
                <output for="step">1</output>
                <input type="range" id="step" min="1" max="2" value="1" aria-label="단계">
                <div class="ends"><span>1</span><span>2</span></div>
            </div>
            <p class="feed">이송률 <span class="num">0.000000</span></p>

            <div class="dtabs">
                <button type="button" disabled>재생</button>
                <button type="button" class="on" disabled>3D 동적</button>
                <button type="button" disabled>2D 동적</button>
            </div>
            <div class="panel">
                <div class="field"><label for="f1">공구 디스플레이</label><span class="drop s1"><select id="f1" disabled><option>공구</option></select></span></div>
                <div class="field"><label for="f2">공구 경로</label><span class="drop s2"><select id="f2" disabled><option>없음</option></select></span></div>
                <div class="field"><label for="f3">IPW 해상도</label><span class="drop s3"><select id="f3" disabled><option>중간</option></select></span></div>
                <div class="btns"><button type="button" disabled>디스플레이 옵션</button></div>
                <hr>
                <div class="field"><label for="f4">IPW</label><span class="drop s4"><select id="f4" disabled><option>없음</option></select></span></div>
                <fieldset>
                    <legend>파셋화된 솔리드</legend>
                    <div class="radios">
                        <label><input type="radio" name="solid" checked disabled>IPW</label>
                        <label><input type="radio" name="solid" disabled>가우즈</label>
                        <label><input type="radio" name="solid" disabled>초과</label>
                    </div>
                </fieldset>
                <div class="btns in4"><button type="button" disabled>생성</button><button type="button" disabled>삭제</button><button type="button" disabled>해석</button></div>
                <div class="btns in2"><button type="button" disabled>색상 별로 두께 표시</button></div>
                <hr>
                <label class="check"><input type="checkbox" checked disabled>IPW 충돌 체크</label>
                <label class="check"><input type="checkbox" checked disabled>공구 및 홀더 체크</label>
                <div class="btns in3"><button type="button" disabled>충돌 설정값</button><button type="button" disabled>리스트</button></div>
                <hr>
                <div class="btns"><button type="button" disabled>재설정</button></div>
                <hr>
                <label class="check"><input type="checkbox" disabled>애니메이션 억제</label>
            </div>

            <label class="speed" for="speed">애니메이션 속도</label>
            <div class="slide">
                <output for="speed" class="at3">3</output>
                <input type="range" id="speed" min="1" max="10" value="3">
                <div class="ends"><span>1</span><span>10</span></div>
            </div>
            <div class="media">
                <button type="button" disabled aria-label="처음"><svg viewBox="0 0 30 30"><path d="M16 8v15l-8-7.500zM25 8v15l-8-7.500z" fill="#a08c8c"/><path d="M5 8h2v15H5z" fill="#8c8ca4"/></svg></button>
                <button type="button" disabled aria-label="이전"><svg viewBox="0 0 30 30"><path d="M20 8v15l-8-7.500z" fill="#a08c8c"/><path d="M9 8h2v15H9z" fill="#8c8ca4"/></svg></button>
                <button type="button" disabled aria-label="역재생"><svg viewBox="0 0 30 30"><path d="M18 8v15l-8-7.500z" fill="#a08c8c"/></svg></button>
                <button type="button" disabled aria-label="재생"><svg viewBox="0 0 30 30"><path d="M12 8v15l8-7.500z" fill="#a08c8c"/></svg></button>
                <button type="button" disabled aria-label="다음"><svg viewBox="0 0 30 30"><path d="M10 8v15l8-7.500z" fill="#a08c8c"/><path d="M19 8h2v15h-2z" fill="#8c8ca4"/></svg></button>
                <button type="button" disabled aria-label="끝"><svg viewBox="0 0 30 30"><path d="M5 8v15l8-7.500zM14 8v15l8-7.500z" fill="#a08c8c"/><path d="M23 8h2v15h-2z" fill="#8c8ca4"/></svg></button>
                <button type="button" class="stop" aria-label="정지"><svg viewBox="0 0 30 30"><path d="M9 9h12v12H9z" fill="#800000"/></svg></button>
            </div>
            <div class="confirm">
                <button type="submit" disabled>확인</button>
                <button type="button" disabled>취소</button>
            </div>
        </div>
    </form>
</body>

</html>
```
FILE: styles.css
```css
* {
    box-sizing: border-box;
    margin: 0;
    padding: 0;
}
body {
    font-family: "Noto Sans CJK KR", sans-serif;
    font-size: 16px;
    line-height: 20px;
    color: #1e1e1e;
    background: #fff;
    overflow: hidden;
}
ul {
    list-style: none;
}
button {
    font: inherit;
    color: inherit;
    background: none;
    border: 0;
}
a {
    color: inherit;
    text-decoration: none;
}
svg {
    display: block;
    flex: none;
}
.defs {
    position: absolute;
}
.app {
    display: flex;
    flex-direction: column;
    height: 100vh;
}
.caret {
    display: inline-block;
    flex: none;
    border: 3px solid transparent;
    border-top-color: #111;
    border-bottom: 0;
}

/* 제목 표시줄 */
.titlebar {
    display: flex;
    align-items: center;
    height: 30px;
}
.quick {
    display: flex;
    align-items: center;
    flex: none;
    width: 695px;
}
.logo {
    width: 48px;
    padding-left: 3px;
    font: bold 25px/30px "Liberation Sans", sans-serif;
    color: #8399ac;
}
.q {
    display: flex;
    align-items: center;
    gap: 6px;
    height: 24px;
    padding: 0 3px;
}
.q svg {
    width: 16px;
    height: 16px;
}
.q.sep {
    border-left: 1px solid #ddd;
    padding: 0 5px 0 7px;
}
.titlebar h1 {
    flex: 1;
    font-size: 15px;
    font-weight: 400;
    text-align: center;
}

.tabs {
    display: flex;
    height: 31px;
    background: #c8d8d6;
}
.tabs a {
    padding: 0 14px;
    line-height: 30px;
}
.tabs .file {
    width: 90px;
    margin-right: 1px;
    padding: 0;
    text-align: center;
    color: #fff;
    background: #5b8680;
}
.tabs .on {
    color: #2f83b8;
    background: #fff;
    border-top: 1px solid #9aaba9;
}

/* 리본 */
.ribbon {
    display: flex;
    height: 103px;
    font-size: 15px;
    line-height: 19px;
    border-bottom: 1px solid #d9d9d9;
}
.group {
    display: flex;
    flex: none;
    flex-direction: column;
    justify-content: space-between;
    margin: 4px 0;
    border-right: 1px solid #d9d9d9;
}
.g-insert { width: 239px; }
.g-work { width: 504px; }
.g-disp { width: 88px; }
.g-ipw { width: 121px; }
.g-anal { width: 60px; }
.g-geo { width: 134px; }
.g-sync { width: 218px; }
.w58 { width: 58px; }
.w62 { width: 62px; }
.w70 { width: 70px; }
.w94 { width: 94px; }
.tools {
    display: flex;
}
.tools.right {
    justify-content: flex-end;
    padding-right: 2px;
}
.cap {
    display: flex;
    align-items: center;
    height: 18px;
    padding-right: 8px;
    color: #2f83b8;
}
.cap span {
    flex: 1;
    text-align: center;
}
.cap.start {
    padding-left: 3px;
}
.cap.start span {
    text-align: left;
}
.big {
    display: block;
    flex: none;
    align-self: flex-start;
    white-space: nowrap;
}
.big svg {
    width: 30px;
    height: 34px;
    margin: 0 auto 2px;
}
.big .boxed {
    width: 38px;
    height: 34px;
    border: 1px solid #ebebeb;
    border-radius: 3px;
}
.big .caret {
    margin: 0 0 3px 4px;
}
.big .boxed ~ .caret,
.g-geo .w58 .caret {
    display: block;
    width: 6px;
    margin: 6px auto 0;
}
.w62 span {
    display: block;
    margin: 0 -5px;
}
.g-geo .w70 {
    margin-left: -5px;
}
.off {
    color: #c4c4c4;
}
.smalls {
    display: grid;
    align-content: start;
    margin-top: -2px;
}
.smalls button {
    display: flex;
    align-items: center;
    gap: 7px;
    height: 25px;
}
.smalls svg {
    width: 17px;
    height: 17px;
}
.smalls.two {
    grid-template-columns: 38px 38px;
    padding-left: 10px;
}
.smalls.cones {
    grid-template-columns: 26px 26px;
    padding-left: 12px;
    margin-right: -5px;
}
.g-sync .tools {
    padding-left: 7px;
}
.lines {
    width: 92px;
    margin: -3px 5px 0 3px;
    color: #c4c4c4;
}
.lines button {
    display: flex;
    align-items: center;
    gap: 4px;
    height: 25px;
    white-space: nowrap;
}
.lines svg {
    width: 16px;
    height: 16px;
}

/* 도구 모음 */
.toolbar {
    display: flex;
    align-items: center;
    height: 35px;
    border-bottom: 1px solid #7f8a8f;
}
.bar-left {
    display: flex;
    align-items: center;
    flex: none;
    width: 632px;
}
.toolbar button {
    display: flex;
    align-items: center;
    gap: 6px;
    padding: 0 4px 0 3px;
}
.toolbar svg {
    width: 18px;
    height: 18px;
}
.toolbar .menu {
    gap: 4px;
    padding: 0 0 0 9px;
    font-size: 15px;
}
.rule {
    width: 1px;
    height: 27px;
    margin: 0 8px 0 6px;
    background: #d5d5d5;
}

.work {
    display: flex;
    flex: 1;
    min-height: 0;
}
.resource {
    flex: none;
    width: 32px;
    background: #dcdcdc;
    border-right: 1px solid #a0a0a0;
}
.resource button {
    display: flex;
    align-items: center;
    justify-content: flex-end;
    width: 31px;
    height: 42px;
    padding-right: 2px;
}
.resource svg {
    width: 23px;
    height: 23px;
}
.resource .gear {
    height: 26px;
    margin-bottom: 16px;
    padding-right: 9px;
}
.gear svg {
    width: 14px;
    height: 14px;
}
.resource .on {
    width: 30px;
    margin-left: 2px;
    padding-right: 3px;
    background: #fff;
    outline: 1px solid #a0a0a0;
    clip-path: inset(-1px 0 -1px -1px);
}
.resource .far {
    margin-bottom: 12px;
}

/* 오퍼레이션 탐색기 */
.navigator {
    display: flex;
    flex: none;
    flex-direction: column;
    width: 339px;
    padding: 0 9px 6px 6px;
    border-right: 1px solid #7f8a8f;
}
.navigator h2 {
    height: 32px;
    padding-left: 4px;
    font-size: 16px;
    line-height: 31px;
    font-weight: 400;
}
.tree {
    display: flex;
    flex: 1;
    flex-direction: column;
    min-height: 0;
    padding-left: 1px;
    border: 1px solid #cfcfcf;
    border-bottom: 1px solid #aaa;
}
.head {
    height: 24px;
    padding-left: 7px;
    font-size: 15px;
    line-height: 23px;
    background: #efefef;
    border-bottom: 1px solid #ccc;
}
.tree ul {
    flex: 1;
    min-height: 0;
    overflow: hidden;
    background: repeating-linear-gradient(#fff 0 23px, #e9e9e9 23px 24px, #fafafa 24px 47px, #e9e9e9 47px 48px);
}
.tree li {
    display: flex;
    align-items: center;
    height: 24px;
    font: 14px/24px "Open Sans", "Noto Sans CJK KR", sans-serif;
    white-space: nowrap;
}
.tree .ko {
    font-family: "Noto Sans CJK KR", sans-serif;
    font-size: 16px;
}
.tree .root {
    padding-left: 3px;
}
.b { width: 22px; height: 24px; }
.b2 { width: 42px; height: 24px; }
.n { width: 16px; height: 16px; }
.w { width: 10px; height: 17px; }
.e { width: 17px; height: 17px; margin: 0 1px; }
.tree li .b + .n {
    margin-left: -2px;
    margin-right: 2px;
}
.tree li .w {
    margin-left: -1px;
}
.tree .sel {
    flex: 1;
    color: #fff;
    background: #39f;
}
.tree li span {
    padding-left: 3px;
}
.hscroll {
    display: flex;
    align-items: center;
    flex: none;
    height: 20px;
    padding: 0 5px 1px;
    background: #f0f0f0;
}
.hscroll svg {
    width: 10px;
    height: 12px;
}
.thumb {
    width: 202px;
    height: 19px;
    margin-left: 6px;
    background: #cdcdcd;
}
.thumb.short {
    width: 89px;
}
.hscroll .end {
    margin-left: auto;
}
.splitter {
    height: 5px;
    margin-top: 1px;
    background: #dcdcdc;
    border: 1px solid #aaa;
}
.fold {
    display: flex;
    align-items: center;
    justify-content: space-between;
    height: 28px;
    padding: 0 6px 0 7px;
    font-size: 19px;
    color: #2f83b8;
    border-bottom: 2px solid #cfcfcf;
}
.fold svg {
    width: 15px;
    height: 13px;
}
.view {
    flex: 1;
    min-width: 0;
    width: 0;
    height: 100%;
}
.axis {
    font: 13px "Liberation Sans", sans-serif;
    fill: #c8373c;
}
.status {
    flex: none;
    height: 13px;
    padding-left: 4px;
    font-size: 15px;
    font-weight: 500;
    border-top: 1px solid #aaa;
    white-space: nowrap;
}

/* 공구 경로 시각화 창 */
.dialog {
    position: absolute;
    top: 0;
    left: 258px;
    width: 369px;
    background: #e8e8e8;
    border: 1px solid #b9b9b9;
    border-top: 0;
}
.dlg-head {
    display: flex;
    align-items: center;
    height: 27px;
    margin: 0 -1px;
    padding: 0 10px;
    color: #fff;
    background: #5b8680;
}
.dlg-head svg {
    width: 14px;
    height: 14px;
}
.dlg-head h2 {
    flex: 1;
    padding-left: 11px;
    font-size: 16px;
    line-height: 18px;
    font-weight: 400;
}
.dlg-head button svg {
    width: 13px;
    height: 13px;
}
.dlg-body {
    padding: 8px 9px 10px;
}
.listbox {
    margin-left: 2px;
    padding: 1px;
    background: #fff;
    border: 1px solid #a9a9a9;
}
.listbox ul {
    height: 124px;
    overflow: hidden;
    font: 14px/20px "Open Sans", sans-serif;
}
.listbox li {
    height: 20px;
    white-space: nowrap;
}
.listbox .sel {
    line-height: 18px;
    color: #fff;
    background: #39f;
    border: 1px dotted #b46a1e;
    border-width: 1px 1px 1px 0;
}
.slide {
    padding-top: 4px;
    font: 14px/20px "Open Sans", sans-serif;
}
.slide output {
    display: block;
    padding-left: 8px;
}
.slide .at3 {
    padding-left: 80px;
}
.slide input {
    display: block;
    width: 329px;
    height: 22px;
    margin: 3px 0 0 10px;
    appearance: none;
    background: linear-gradient(#afafaf, #afafaf) 0 14px / 100% 4px no-repeat;
}
.slide input::-webkit-slider-thumb {
    appearance: none;
    width: 15px;
    height: 22px;
    background: #a8c0bd;
    border: 1px solid #49504f;
    border-bottom: 0;
}
.ends {
    display: flex;
    justify-content: space-between;
    margin-top: 1px;
    padding-left: 5px;
}
.feed {
    margin-top: 6px;
    padding-left: 1px;
    font-size: 15px;
}
.num {
    font: 14px/20px "Open Sans", sans-serif;
}
.dtabs {
    display: flex;
    align-items: flex-end;
    margin: 3px 0 -1px 2px;
    color: #b4b4b4;
}
.dtabs button {
    width: 69px;
    height: 32px;
    margin-right: -1px;
    padding-bottom: 2px;
    font-size: 15px;
    border: 1px solid #b0b0b0;
    border-bottom: 0;
}
.dtabs button:first-child {
    width: 58px;
}
.dtabs .on {
    position: relative;
    width: 74px;
    height: 34px;
    background: #e8e8e8;
}
.panel {
    display: flex;
    flex-direction: column;
    gap: 2px;
    padding: 4px 6px 6px;
    color: #9c9c9c;
    background: #fff;
    border: 1px solid #bdbdbd;
}
.field {
    display: flex;
    align-items: center;
    justify-content: space-between;
    height: 28px;
}
.drop {
    position: relative;
}
.drop::after {
    content: "";
    position: absolute;
    top: 12px;
    right: 7px;
    border: 4px solid transparent;
    border-top-color: #a0a0a0;
    border-bottom: 0;
}
.drop select {
    display: block;
    width: 100%;
    height: 28px;
    padding: 0 5px;
    font: inherit;
    color: #757575;
    opacity: 1;
    background: #fff;
    border: 1px solid #a3a3a3;
    border-radius: 0;
    appearance: none;
}
.s1 { width: 121px; }
.s2 { width: 136px; }
.s3 { width: 96px; }
.s4 { width: 226px; }
.btns {
    display: flex;
    gap: 2px;
    color: #b0b0b0;
}
.btns button {
    flex: 1;
    height: 32px;
    padding-bottom: 2px;
    border: 1px solid #cdcdcd;
}
.btns.in2 {
    margin: 2px 2px 2px 0;
}
.btns.in3 {
    margin: 0 3px 2px 0;
}
.btns.in4 {
    margin: 1px 4px 0 0;
}
.panel hr {
    height: 1px;
    border: 0;
    background: #cdcdcd;
}
.panel hr + .field,
.panel hr + .btns {
    margin-top: 1px;
}
.panel fieldset {
    width: 240px;
    height: 54px;
    margin: 1px 0 0 47px;
    border: 1px solid #e6e6e6;
    border-width: 0 1px 1px 0;
    border-bottom-color: #cdcdcd;
}
.panel legend {
    float: left;
    width: 100%;
    padding-left: 10px;
    font-size: 19px;
    line-height: 24px;
    color: #2f83b8;
}
.radios {
    display: flex;
    clear: both;
    padding: 4px 0 0 6px;
    font-size: 15px;
}
.radios label {
    display: flex;
    align-items: center;
    gap: 5px;
    width: 77px;
}
.radios input {
    width: 18px;
    height: 18px;
    appearance: none;
    border: 1px solid #c4c4c4;
    border-radius: 50%;
}
.radios input:checked {
    background: radial-gradient(#c4c4c4 0 6px, #fff 7px);
}
.check {
    display: flex;
    align-items: center;
    gap: 4px;
    height: 24px;
}
.check input {
    width: 18px;
    height: 18px;
    appearance: none;
    border: 1px solid #c4c4c4;
}
.check input:checked::after {
    content: "";
    display: block;
    width: 12px;
    height: 6px;
    margin: 3px 0 0 2px;
    border: 2px solid #c4c4c4;
    border-width: 0 0 2px 2px;
    transform: rotate(-45deg);
}
.panel hr + .check {
    margin-top: 1px;
}
.speed {
    display: block;
    padding: 4px 0 2px 1px;
}
.media {
    display: flex;
    gap: 2px;
    margin-top: 3px;
    padding-left: 56px;
}
.media button {
    width: 32px;
    height: 32px;
    border: 1px solid #d0d0d0;
}
.media .stop {
    border-color: #ababab;
}
.confirm {
    display: flex;
    justify-content: flex-end;
    gap: 5px;
    margin-top: 12px;
    padding-right: 6px;
}
.confirm button {
    width: 60px;
    height: 28px;
    padding-bottom: 2px;
    color: #aaa;
    background: #dcdcdc;
    border: 1px solid #b0b0b0;
}
```
